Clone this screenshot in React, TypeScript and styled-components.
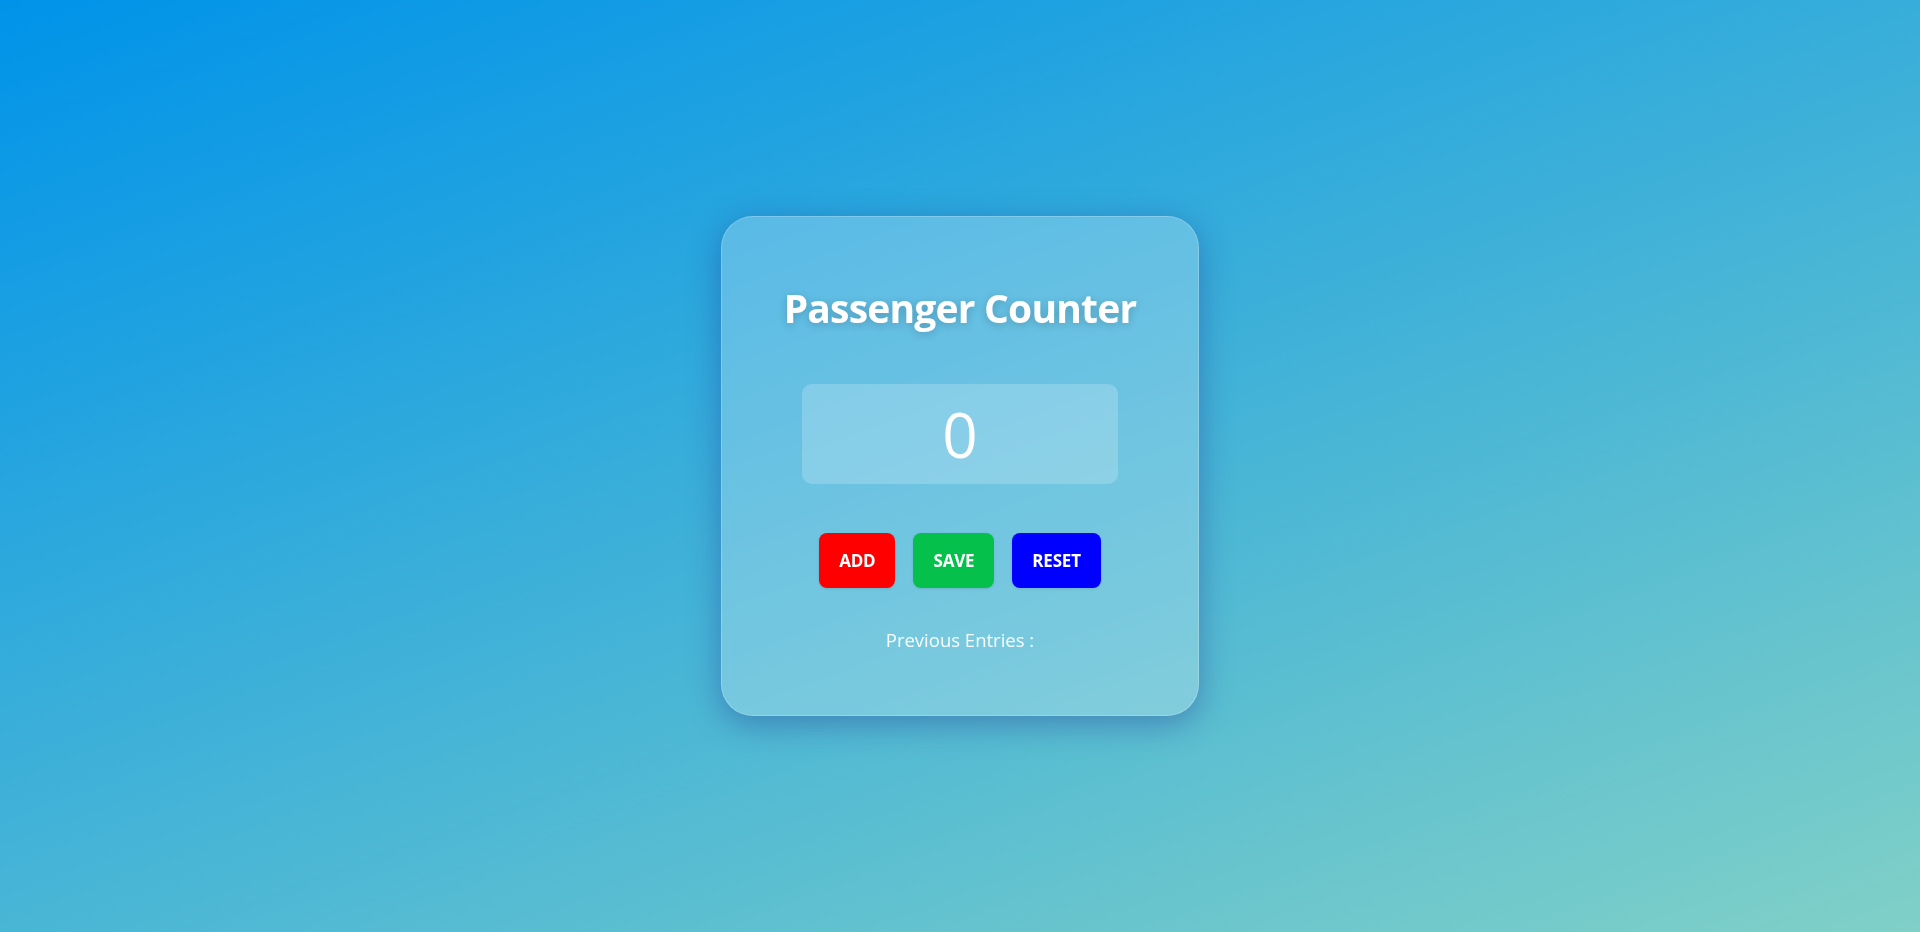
import React, { useState } from "react";
import styled, { createGlobalStyle } from "styled-components";

const GlobalStyle = createGlobalStyle`
  html, body {
    margin: 0;
    padding: 0;
    height: 100%;
  }
  body {
    font-family: "Open Sans", "Noto Sans", sans-serif;
    background-color: #0093e9;
    background-image: linear-gradient(160deg, #0093e9 0%, #80d0c7 100%);
    background-attachment: fixed;
    min-height: 932px;
  }
`;

const Page = styled.main`
  min-height: 932px;
  display: flex;
  align-items: center;
  justify-content: center;
`;

const Card = styled.section`
  box-sizing: border-box;
  width: 478px;
  height: 500px;
  padding-top: 64px;
  display: flex;
  flex-direction: column;
  align-items: center;
  background: rgba(255, 255, 255, 0.24);
  border: 1px solid rgba(255, 255, 255, 0.22);
  border-radius: 32px;
  box-shadow: 0 8px 32px 0 rgba(31, 38, 135, 0.37);
  backdrop-filter: blur(4px);
  color: #ffffff;
`;

const Title = styled.h1`
  margin: 0;
  font-size: 39px;
  line-height: 54px;
  font-weight: 700;
  letter-spacing: -0.8px;
  text-shadow: 0 2px 10px rgba(0, 0, 0, 0.2);
`;

const CounterBox = styled.div`
  margin-top: 49px;
  width: 316px;
  height: 100px;
  border-radius: 10px;
  background: rgba(255, 255, 255, 0.2);
  display: flex;
  align-items: center;
  justify-content: center;
  font-size: 62px;
  font-weight: 400;
  line-height: 1;
`;

const ButtonRow = styled.div`
  margin-top: 49px;
  display: flex;
  gap: 18px;
`;

const ActionButton = styled.button<{ $bg: string }>`
  height: 55px;
  padding: 0 20px;
  border: none;
  border-radius: 8px;
  background: ${(p) => p.$bg};
  color: #ffffff;
  font-family: "Open Sans", "Noto Sans", sans-serif;
  font-size: 17px;
  font-weight: 700;
  letter-spacing: -0.2px;
  box-shadow: 0 1px 3px rgba(0, 0, 0, 0.1);
  cursor: pointer;
`;

const Entries = styled.p`
  margin: 38px 0 0;
  font-size: 18.5px;
  line-height: 28px;
  color: rgba(255, 255, 255, 0.95);
`;

export default function App() {
  const [count, setCount] = useState(0);
  const [entries, setEntries] = useState<number[]>([]);

  return (
    <>
      <GlobalStyle />
      <Page>
        <Card>
          <Title>Passenger Counter</Title>
          <CounterBox>{count}</CounterBox>
          <ButtonRow>
            <ActionButton $bg="#ff0000" onClick={() => setCount((c) => c + 1)}>
              ADD
            </ActionButton>
            <ActionButton
              $bg="#05c04b"
              onClick={() => {
                setEntries((e) => [...e, count]);
                setCount(0);
              }}
            >
              SAVE
            </ActionButton>
            <ActionButton
              $bg="#0000ff"
              onClick={() => {
                setCount(0);
                setEntries([]);
              }}
            >
              RESET
            </ActionButton>
          </ButtonRow>
          <Entries>
            Previous Entries :{entries.length > 0 ? " " + entries.join(" - ") : ""}
          </Entries>
        </Card>
      </Page>
    </>
  );
}
